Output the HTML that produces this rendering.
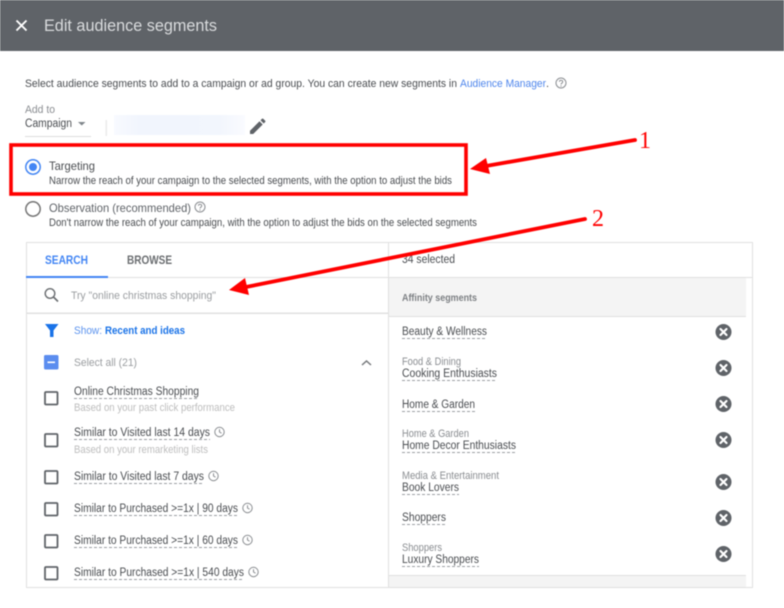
<!DOCTYPE html>
<html><head><meta charset="utf-8"><style>
html,body{margin:0;padding:0;background:#fff;width:784px;height:608px;overflow:hidden}
svg{display:block;filter:blur(.4px)}
text{font-family:"Liberation Sans",sans-serif;white-space:pre}
.b{font-size:12px;fill:#4a4d51}
.n{font-size:11.5px;fill:#4a4d51}
.s{font-size:11px;fill:#4a4d51}
.g{font-size:10.8px;fill:#bdbdbd}
.c{font-size:11.2px;fill:#8a8d91}
.p{font-size:11.3px;fill:#9a9da0}
.d{stroke:#9b9ea1;stroke-width:1;stroke-dasharray:3 2;fill:none}
.cb{fill:none;stroke:#5f6368;stroke-width:1.8}
.cl{fill:none;stroke:#8a8d91;stroke-width:1}
.r{font-family:"Liberation Serif",serif;font-size:24px;fill:#f00}
</style></head><body>
<svg width="784" height="608" viewBox="0 0 784 608" xmlns="http://www.w3.org/2000/svg">
<defs>
<linearGradient id="bl" x1="0" x2="1" y1="0" y2="0"><stop offset="0" stop-color="#f8faff"/><stop offset=".2" stop-color="#f1f5fd"/><stop offset=".8" stop-color="#f2f6fd"/><stop offset="1" stop-color="#fafbff"/></linearGradient>
<g id="clk"><circle cx="0" cy="0" r="4.7" class="cl"/><path d="M0-2.700V0L2 1.200" class="cl"/></g>
<g id="xc"><circle r="8" fill="#5f6368"/><path d="M-3-3L3 3M3-3L-3 3" stroke="#fff" stroke-width="2.200" stroke-linecap="round"/></g>
<g id="hp"><circle r="5" class="cl"/><path d="M-1.600-1.200C-1.600-3.200 1.700-3.200 1.700-1.100C1.700 .2 0 .2 0 1.500" class="cl"/><circle cy="3" r=".6" fill="#8a8d91"/></g>
</defs>
<rect width="784" height="608" fill="#fff"/>
<!-- header -->
<rect width="784" height="51" fill="#5f6368"/>
<path d="M16.500 20.500L26.500 30.500M26.500 20.500L16.500 30.500" stroke="#fff" stroke-width="1.900"/>
<text x="44" y="31" fill="#d9dbdd" textLength="173" lengthAdjust="spacingAndGlyphs" style="font-size:16.500px">Edit audience segments</text>
<!-- intro -->
<text class="s" x="25" y="87" textLength="432" lengthAdjust="spacingAndGlyphs">Select audience segments to add to a campaign or ad group. You can create new segments in</text>
<text class="s" x="460" y="87" style="fill:#4f86ec" textLength="86" lengthAdjust="spacingAndGlyphs">Audience Manager</text>
<text class="s" x="546" y="87">.</text>
<use href="#hp" x="561" y="83"/>
<!-- add to -->
<text class="c" x="25" y="113" textLength="30" lengthAdjust="spacingAndGlyphs">Add to</text>
<text class="n" x="25" y="127" textLength="47" lengthAdjust="spacingAndGlyphs">Campaign</text>
<path d="M78 122h7.500l-3.750 3.500z" fill="#80868b"/>
<rect x="25" y="136" width="66" height="1" fill="#dcdcdc"/>
<rect x="105.500" y="120" width="1.500" height="16" fill="#ebebeb"/>
<rect x="114" y="115" width="131" height="20" fill="url(#bl)"/>
<path d="M250 134v-3.200l9.500-9.500 3.200 3.200-9.500 9.500zM260.500 120.300l1.500-1.500q.6-.5 1.200 0l2 2q.5.6 0 1.200l-1.500 1.500z" fill="#5f6368"/>
<!-- red box -->
<rect x="11" y="145" width="455" height="49" fill="none" stroke="#f00" stroke-width="3.600"/>
<!-- radios -->
<circle cx="33" cy="167" r="7.200" fill="none" stroke="#4285f4" stroke-width="1.500"/>
<circle cx="33" cy="167" r="4" fill="#4285f4"/>
<text class="b" x="49" y="170" textLength="46" lengthAdjust="spacingAndGlyphs">Targeting</text>
<text class="s" x="49" y="184" style="font-size:10.800px" textLength="403" lengthAdjust="spacingAndGlyphs">Narrow the reach of your campaign to the selected segments, with the option to adjust the bids</text>
<circle cx="33" cy="209" r="7.200" fill="none" stroke="#757575" stroke-width="1.500"/>
<text class="b" x="49" y="212" style="fill:#5f6368" textLength="142" lengthAdjust="spacingAndGlyphs">Observation (recommended)</text>
<use href="#hp" x="200" y="207"/>
<text class="s" x="49" y="226" style="font-size:10.800px" textLength="428" lengthAdjust="spacingAndGlyphs">Don't narrow the reach of your campaign, with the option to adjust the bids on the selected segments</text>
<!-- panel -->
<rect x="26.500" y="242.500" width="726" height="345" fill="#fff" stroke="#e0e0e0"/>
<rect x="388" y="243" width="1" height="344" fill="#e0e0e0"/>
<rect x="27" y="277" width="361" height="1" fill="#e0e0e0"/>
<rect x="26" y="276" width="82" height="2" fill="#4285f4"/>
<text x="45" y="264" style="font-size:11.500px;fill:#4285f4;font-weight:bold" textLength="43" lengthAdjust="spacingAndGlyphs">SEARCH</text>
<text x="127" y="264" style="font-size:11.500px;fill:#6a6d70;font-weight:bold" textLength="45" lengthAdjust="spacingAndGlyphs">BROWSE</text>
<circle cx="50" cy="293.500" r="4.800" fill="none" stroke="#6a6d70" stroke-width="1.400"/>
<path d="M53.500 297L58 301.500" stroke="#6a6d70" stroke-width="1.600"/>
<text class="p" x="71" y="299" textLength="145" lengthAdjust="spacingAndGlyphs">Try "online christmas shopping"</text>
<rect x="27" y="312.500" width="361" height="1.500" fill="#e0e0e0"/>
<path d="M45 324h13.500l-5 6.500v6.500h-3.500v-6.500z" fill="#1a73e8"/>
<text class="s" x="74" y="334" style="fill:#5b93ee" textLength="28" lengthAdjust="spacingAndGlyphs">Show:</text>
<text class="s" x="105" y="334" style="fill:#1a73e8;font-weight:bold" textLength="80" lengthAdjust="spacingAndGlyphs">Recent and ideas</text>
<rect x="44" y="355" width="14.500" height="14.500" rx="1.500" fill="#5b8def"/>
<rect x="47.500" y="361.500" width="7.500" height="1.600" fill="#fff"/>
<text class="p" x="74" y="366" textLength="63" lengthAdjust="spacingAndGlyphs">Select all (21)</text>
<path d="M362 365l4.500-4 4.500 4" fill="none" stroke="#75787b" stroke-width="1.500"/>
<!-- left list -->
<rect class="cb" x="45" y="392" width="12.500" height="12.500" rx="1"/>
<text class="n" x="74" y="395" textLength="125" lengthAdjust="spacingAndGlyphs">Online Christmas Shopping</text>
<path class="d" d="M74 398.500H199"/>
<text class="g" x="74" y="411" textLength="161" lengthAdjust="spacingAndGlyphs">Based on your past click performance</text>
<rect class="cb" x="45" y="434" width="12.500" height="12.500" rx="1"/>
<text class="n" x="74" y="436" textLength="136" lengthAdjust="spacingAndGlyphs">Similar to Visited last 14 days</text>
<path class="d" d="M74 439.500H210"/>
<use href="#clk" x="219.500" y="432"/>
<text class="g" x="74" y="453" textLength="134" lengthAdjust="spacingAndGlyphs">Based on your remarketing lists</text>
<rect class="cb" x="45" y="471" width="12.500" height="12.500" rx="1"/>
<text class="n" x="74" y="480" textLength="130" lengthAdjust="spacingAndGlyphs">Similar to Visited last 7 days</text>
<path class="d" d="M74 483.500H204"/>
<use href="#clk" x="213.500" y="476"/>
<rect class="cb" x="45" y="503" width="12.500" height="12.500" rx="1"/>
<text class="n" x="74" y="512" textLength="164" lengthAdjust="spacingAndGlyphs">Similar to Purchased &gt;=1x | 90 days</text>
<path class="d" d="M74 515.500H238"/>
<use href="#clk" x="247.500" y="508"/>
<rect class="cb" x="45" y="535" width="12.500" height="12.500" rx="1"/>
<text class="n" x="74" y="544" textLength="164" lengthAdjust="spacingAndGlyphs">Similar to Purchased &gt;=1x | 60 days</text>
<path class="d" d="M74 547.500H238"/>
<use href="#clk" x="247.500" y="540"/>
<rect class="cb" x="45" y="567" width="12.500" height="12.500" rx="1"/>
<text class="n" x="74" y="576" textLength="170" lengthAdjust="spacingAndGlyphs">Similar to Purchased &gt;=1x | 540 days</text>
<path class="d" d="M74 579.500H244"/>
<use href="#clk" x="253.500" y="572"/>
<!-- right -->
<text class="n" x="402" y="263" textLength="53" lengthAdjust="spacingAndGlyphs">34 selected</text>
<rect x="389" y="277" width="363" height="1" fill="#e0e0e0"/>
<rect x="389" y="278" width="357" height="38" fill="#f4f4f4"/>
<rect x="389" y="316" width="357" height="1" fill="#e0e0e0"/>
<text x="402" y="301" style="font-size:10.500px;fill:#7d8084;font-weight:bold" textLength="75" lengthAdjust="spacingAndGlyphs">Affinity segments</text>
<text class="n" x="402" y="335" textLength="85" lengthAdjust="spacingAndGlyphs">Beauty &amp; Wellness</text>
<path class="d" d="M402 338.500H487"/>
<text class="c" x="402" y="365" textLength="59" lengthAdjust="spacingAndGlyphs">Food &amp; Dining</text>
<text class="n" x="402" y="377" textLength="95" lengthAdjust="spacingAndGlyphs">Cooking Enthusiasts</text>
<path class="d" d="M402 380.500H497"/>
<text class="n" x="402" y="408" textLength="73" lengthAdjust="spacingAndGlyphs">Home &amp; Garden</text>
<path class="d" d="M402 411.500H475"/>
<text class="c" x="402" y="437" textLength="67" lengthAdjust="spacingAndGlyphs">Home &amp; Garden</text>
<text class="n" x="402" y="449" textLength="114" lengthAdjust="spacingAndGlyphs">Home Decor Enthusiasts</text>
<path class="d" d="M402 452.500H516"/>
<text class="c" x="402" y="479" textLength="97" lengthAdjust="spacingAndGlyphs">Media &amp; Entertainment</text>
<text class="n" x="402" y="491" textLength="57" lengthAdjust="spacingAndGlyphs">Book Lovers</text>
<path class="d" d="M402 494.500H459"/>
<text class="n" x="402" y="521" textLength="44" lengthAdjust="spacingAndGlyphs">Shoppers</text>
<path class="d" d="M402 524.500H446"/>
<text class="c" x="402" y="551" textLength="40" lengthAdjust="spacingAndGlyphs">Shoppers</text>
<text class="n" x="402" y="563" textLength="77" lengthAdjust="spacingAndGlyphs">Luxury Shoppers</text>
<path class="d" d="M402 566.500H479"/>
<use href="#xc" x="723.500" y="332"/>
<use href="#xc" x="723.500" y="368"/>
<use href="#xc" x="723.500" y="404"/>
<use href="#xc" x="723.500" y="440"/>
<use href="#xc" x="723.500" y="482"/>
<use href="#xc" x="723.500" y="518"/>
<use href="#xc" x="723.500" y="554"/>
<rect x="389" y="575" width="357" height="1" fill="#e0e0e0"/>
<rect x="389" y="576" width="357" height="11" fill="#f4f4f4"/>
<!-- arrows -->
<path d="M635 140L486 166" stroke="#f00" stroke-width="3.800" stroke-linecap="round"/>
<path d="M470 169L486 158L490 174z" fill="#f00"/>
<text class="r" x="639" y="148">1</text>
<path d="M585 219L246 287" stroke="#f00" stroke-width="3.800" stroke-linecap="round"/>
<path d="M229 290L245 278L249 295z" fill="#f00"/>
<text class="r" x="592" y="226">2</text>
</svg>
</body></html>
